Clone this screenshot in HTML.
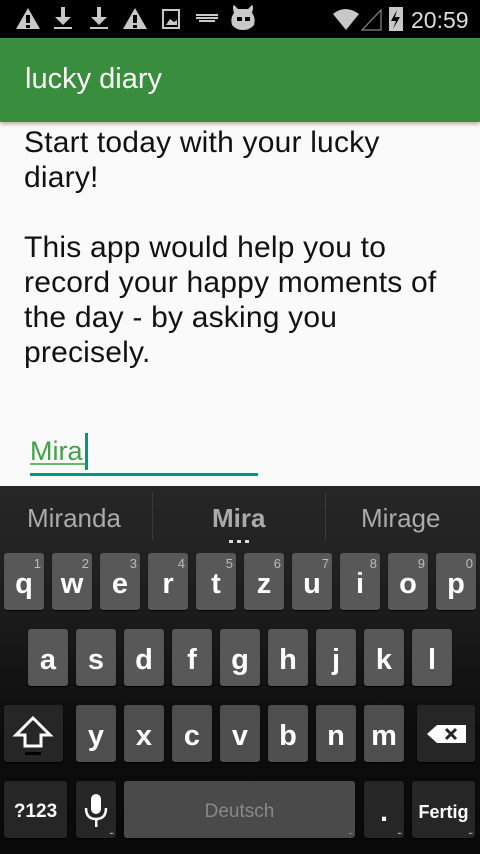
<!DOCTYPE html>
<html><head><meta charset="utf-8"><style>
*{margin:0;padding:0;box-sizing:border-box}
body{width:480px;height:854px;overflow:hidden;background:#fafafa;font-family:"Liberation Sans",sans-serif;position:relative}
.abs{position:absolute}
#sb{left:0;top:0;width:480px;height:38px;background:#000}
#tb{left:0;top:38px;width:480px;height:84px;background:#388e3c;box-shadow:0 2px 4px rgba(0,0,0,.3)}
#tb span{position:absolute;left:25px;top:25px;color:#fff;font-size:29px}
.txt{left:24px;color:#111;font-size:30px;line-height:35px;white-space:nowrap;letter-spacing:0.2px}
#kb{left:0;top:486px;width:480px;height:368px;background:linear-gradient(#262626 0,#222 70px,#0c0c0c 250px,#0a0a0a)}
.sug{top:503px;color:#aaa;font-size:26px}
.k{position:absolute;width:40px;height:57px;background:#585858;border-radius:3px;color:#fff;font-size:29px;font-weight:bold;text-align:center;line-height:62px;box-shadow:0 1px 1px #000}
.k i{position:absolute;right:3px;top:-20px;font-style:normal;font-size:13px;color:#bbb;font-weight:normal}
.d{background:#262626}
.dots{position:absolute;right:3px;bottom:2px;font-size:8px;line-height:8px;color:#aaa;letter-spacing:-1px}
</style></head><body>
<div id="sb" class="abs">
<svg width="480" height="38" style="position:absolute;left:0;top:0">
<g fill="#c8c8c8">
<path d="M28 8 L40 29 L16 29 Z"/><path d="M135 8 L147 29 L123 29 Z"/>
<rect x="61" y="7" width="4" height="12"/><path d="M55 17 L71 17 L63 25 Z"/><rect x="54" y="27" width="18" height="2"/>
<rect x="97" y="7" width="4" height="12"/><path d="M91 17 L107 17 L99 25 Z"/><rect x="90" y="27" width="18" height="2"/>
<path d="M196 14h22v2h-22zM196 17h22v2h-22zM199 20h16v2h-16z"/>
<path d="M234 13 Q232 6 234 5 L238 9 L248 9 L252 5 Q254 6 252 13 Q256 18 254 25 Q250 30 243 30 Q236 30 232 25 Q230 18 234 13Z"/>
<path d="M333 14 Q345 4 359 14 L346 30 Z"/>
<rect x="389" y="7" width="14" height="24"/>
</g>
<g fill="#000"><path d="M26 15h4v8h-4z M26 25h4v3h-4z M133 15h4v8h-4z M133 25h4v3h-4z"/><rect x="237" y="17" width="5" height="4"/><rect x="245" y="17" width="5" height="4"/></g>
<rect x="163" y="10" width="16" height="18" fill="none" stroke="#c8c8c8" stroke-width="2"/>
<path d="M166 25 L170 19 L174 22 L177 20 L177 25Z" fill="#c8c8c8"/>
<path d="M362 30 L381 10 L381 30 Z" fill="none" stroke="#888" stroke-width="1.2"/>
<path d="M397 10 L391 21 L396 21 L393 29 L400 17 L395 17 Z" fill="#000"/>
<text x="411" y="28" fill="#ddd" font-size="23" font-family="Liberation Sans">20:59</text>
</svg>
</div>
<div id="tb" class="abs"><span>lucky diary</span></div>
<div class="abs txt" style="top:125px">Start today with your lucky<br>diary!<br><br>This app would help you to<br>record your happy moments of<br>the day - by asking you<br>precisely.</div>
<div class="abs" style="left:30px;top:436px;color:#43a047;font-size:27px">Mira</div>
<div class="abs" style="left:30px;top:463px;width:55px;height:2px;background:#66bb6a"></div>
<div class="abs" style="left:85px;top:433px;width:3px;height:37px;background:#009688"></div>
<div class="abs" style="left:30px;top:473px;width:228px;height:3px;background:#009688"></div>
<div id="kb" class="abs"></div>
<div class="abs" style="left:152px;top:492px;width:1px;height:48px;background:#3a3a3a"></div>
<div class="abs" style="left:325px;top:492px;width:1px;height:48px;background:#3a3a3a"></div>
<div class="abs sug" style="left:27px">Miranda</div>
<div class="abs sug" style="left:212px;font-weight:bold">Mira</div>
<div class="abs sug" style="left:361px">Mirage</div>
<div class="abs" style="left:229px;top:540px;width:20px;height:3px;background:repeating-linear-gradient(90deg,#ddd 0 4px,transparent 4px 8px)"></div>

<div class="k" style="left:4px;top:553px">q<i>1</i></div>
<div class="k" style="left:52px;top:553px">w<i>2</i></div>
<div class="k" style="left:100px;top:553px">e<i>3</i></div>
<div class="k" style="left:148px;top:553px">r<i>4</i></div>
<div class="k" style="left:196px;top:553px">t<i>5</i></div>
<div class="k" style="left:244px;top:553px">z<i>6</i></div>
<div class="k" style="left:292px;top:553px">u<i>7</i></div>
<div class="k" style="left:340px;top:553px">i<i>8</i></div>
<div class="k" style="left:388px;top:553px">o<i>9</i></div>
<div class="k" style="left:436px;top:553px">p<i>0</i></div>

<div class="k" style="left:28px;top:629px">a</div>
<div class="k" style="left:76px;top:629px">s</div>
<div class="k" style="left:124px;top:629px">d</div>
<div class="k" style="left:172px;top:629px">f</div>
<div class="k" style="left:220px;top:629px">g</div>
<div class="k" style="left:268px;top:629px">h</div>
<div class="k" style="left:316px;top:629px">j</div>
<div class="k" style="left:364px;top:629px">k</div>
<div class="k" style="left:412px;top:629px">l</div>

<div class="k d" style="left:4px;top:705px;width:59px"><svg width="59" height="57" style="position:absolute;left:0;top:0"><path d="M29 13 L46 30 L37 30 L37 41 L21 41 L21 30 L12 30 Z" fill="none" stroke="#fff" stroke-width="3" stroke-linejoin="miter"/><rect x="21" y="47" width="16" height="3" fill="#000"/></svg></div>
<div class="k" style="left:76px;top:705px;background:#4e4e4e">y</div>
<div class="k" style="left:124px;top:705px;background:#4e4e4e">x</div>
<div class="k" style="left:172px;top:705px;background:#4e4e4e">c</div>
<div class="k" style="left:220px;top:705px;background:#4e4e4e">v</div>
<div class="k" style="left:268px;top:705px;background:#4e4e4e">b</div>
<div class="k" style="left:316px;top:705px;background:#4e4e4e">n</div>
<div class="k" style="left:364px;top:705px;background:#4e4e4e">m</div>
<div class="k d" style="left:417px;top:705px;width:58px"><svg width="58" height="57" style="position:absolute;left:0;top:0"><path d="M10 29 L20 20 L49 20 L49 38 L20 38 Z" fill="#fff"/><path d="M29 24 L39 34 M39 24 L29 34" stroke="#262626" stroke-width="3"/></svg></div>

<div class="k d" style="left:4px;top:781px;width:63px;font-size:19px">?123</div>
<div class="k d" style="left:76px;top:781px"><svg width="40" height="57" style="position:absolute;left:0;top:0"><rect x="15" y="13" width="10" height="20" rx="5" fill="#fff"/><path d="M10 27 Q10 38 20 38 Q30 38 30 27" fill="none" stroke="#fff" stroke-width="2.5"/><rect x="19" y="38" width="2.5" height="8" fill="#fff"/></svg><span class="dots">...</span></div>
<div class="k" style="left:124px;top:781px;width:231px;background:#4a4a4a;color:#888;font-weight:normal;font-size:19px">Deutsch<span class="dots">...</span></div>
<div class="k d" style="left:364px;top:781px">.<span class="dots">...</span></div>
<div class="k d" style="left:412px;top:781px;width:63px;font-size:18px">Fertig<span class="dots">...</span></div>
</body></html>
